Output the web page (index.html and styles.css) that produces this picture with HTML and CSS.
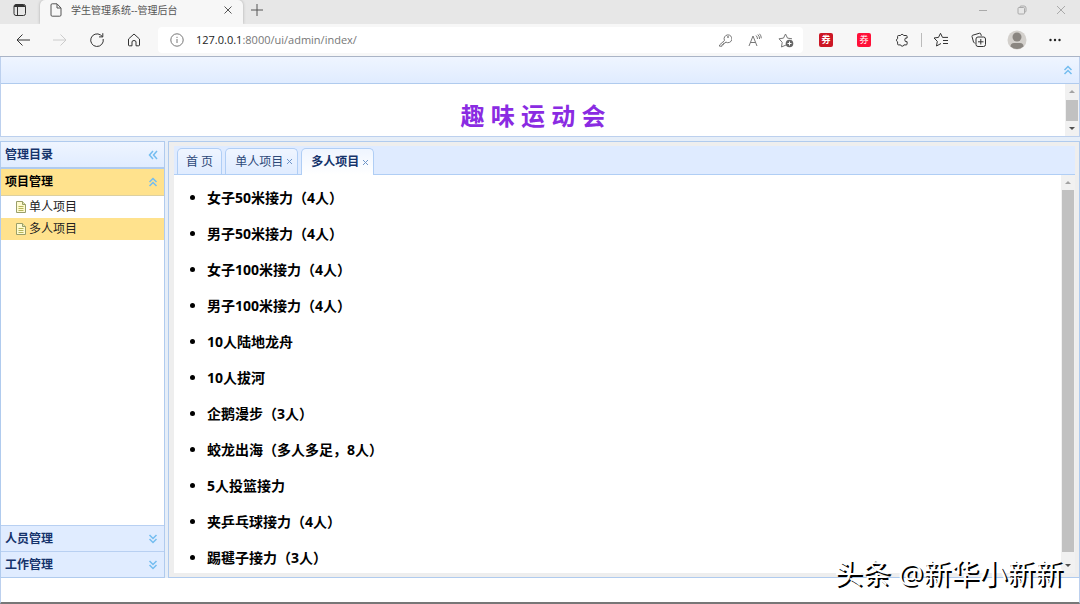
FILE: index.html
```html
<!DOCTYPE html>
<html lang="zh-CN">
<head>
<meta charset="utf-8">
<title>学生管理系统--管理后台</title>
<link rel="stylesheet" href="styles.css">
</head>
<body>
<svg class="defs" aria-hidden="true">
  <symbol id="chev-up" viewBox="0 0 10 10"><path d="M1.500 5 5 1.500 8.500 5M1.500 9 5 5.500 8.500 9"/></symbol>
  <symbol id="chev-down" viewBox="0 0 10 10"><path d="M1.500 1 5 4.500 8.500 1M1.500 5 5 8.500 8.500 5"/></symbol>
  <symbol id="chev-left" viewBox="0 0 10 10"><path d="M5 1 1.500 5 5 9M9 1 5.500 5 9 9"/></symbol>
  <symbol id="doc" viewBox="0 0 12 12"><path d="M1.500.5h6l3 3v8h-9z" fill="#fffbd0" stroke="#9a9f6a"/><path d="M7.500.5v3h3" fill="#dfe5a8" stroke="#9a9f6a"/><path d="M3.500 5.500h5M3.500 7.500h5M3.500 9.500h5" stroke="#b5b55a"/></symbol>
</svg>
<header class="browser">
  <div class="tabstrip">
    <button class="workspace" aria-label="标签操作"><svg width="14" height="14" viewBox="0 0 14 14"><rect x="1" y="1.500" width="11.500" height="11" rx="2"/><path d="M1 3.500h11.500M4.500 4v8.500" /><path d="M2 2.700h9.500" stroke-width="2"/></svg></button>
    <div class="page-tab">
      <svg width="12" height="14" viewBox="0 0 12 14"><path d="M1 2q0-1.200 1.200-1.200H7L11 5v7q0 1.200-1.200 1.200H2.200Q1 13.200 1 12zM7 1v4h4"/></svg>
      <span>学生管理系统--管理后台</span>
      <button aria-label="关闭标签"><svg width="8" height="8" viewBox="0 0 8 8"><path d="M.5.5l7 7M7.500.5l-7 7"/></svg></button>
    </div>
    <button class="new-tab" aria-label="新标签"><svg width="12" height="12" viewBox="0 0 12 12"><path d="M6 0v12M0 6h12"/></svg></button>
    <div class="window-buttons">
      <button aria-label="最小化"><svg width="10" height="10" viewBox="0 0 10 10"><path d="M1 5.500h8"/></svg></button>
      <button aria-label="还原"><svg width="10" height="10" viewBox="0 0 10 10"><rect x="1" y="2.500" width="6.500" height="6.500" rx="1"/><path d="M3 2q0-1 1-1h3q2 0 2 2v3q0 1-1 1"/></svg></button>
      <button aria-label="关闭"><svg width="10" height="10" viewBox="0 0 10 10"><path d="M1 1l8 8M9 1l-8 8"/></svg></button>
    </div>
  </div>
  <div class="toolbar">
    <div class="nav">
      <button aria-label="后退"><svg width="16" height="16" viewBox="0 0 16 16"><path d="M15 8H2M7.500 2.500 2 8l5.500 5.500"/></svg></button>
      <button class="off" aria-label="前进"><svg width="16" height="16" viewBox="0 0 16 16"><path d="M1 8h13M8.500 2.500 14 8l-5.500 5.500"/></svg></button>
      <button aria-label="刷新"><svg width="16" height="16" viewBox="0 0 16 16"><path d="M14.200 7A6.300 6.300 0 1 1 11.600 3l1.900 1.700M13.800 1.200v3.700H10"/></svg></button>
      <button aria-label="主页"><svg width="16" height="16" viewBox="0 0 16 16"><path d="M2.500 7 8 2l5.500 5v6q0 .8-.8.8H10V10Q10 8.500 8 8.500T6 10v3.800H3.300q-.8 0-.8-.8z"/></svg></button>
    </div>
    <div class="address">
      <svg width="14" height="14" viewBox="0 0 14 14"><circle cx="7" cy="7" r="6.200"/><path d="M7 6v4M7 3.800v1.200"/></svg>
      <span class="url"><b>127.0.0.1</b>:8000/ui/admin/index/</span>
      <button aria-label="密码"><svg width="14" height="14" viewBox="0 0 14 14"><path d="M6.500 7.500 1.500 12v1.200H4v-1.500h1.500v-1.500H7L7.800 9a3.900 3.900 0 1 0-1.300-1.500z"/><circle cx="10" cy="4" r=".6"/></svg></button>
      <button aria-label="朗读"><svg width="14" height="14" viewBox="0 0 14 14"><path d="M1 13 5 3l4 10M2.500 9.500h5M8 2.500q1.500 1.500 1.500 3.500M9.800 1.500q1.800 1.800 1.800 4.500M11.500.8q1.800 1.800 1.800 4.500"/></svg></button>
      <button aria-label="收藏"><svg width="16" height="16" viewBox="0 0 16 16"><path d="M8 13 3.500 15l.7-4.700L1 6.800l4.500-.7 2-4.100 2 4.100 4.500.7"/><circle cx="11.500" cy="11.500" r="3.800" fill="#666" stroke="none"/><path d="M11.500 9.500v4M9.500 11.500h4" stroke="#fff"/></svg></button>
    </div>
    <div class="tools">
      <button aria-label="优惠券一"><span class="coupon dark">券</span></button>
      <button aria-label="优惠券二"><span class="coupon">券</span></button>
      <button aria-label="扩展"><svg width="14" height="14" viewBox="0 0 14 14"><path d="M3.500 2.500h2a1.700 1.700 0 0 1 3.200 0h2.500q.9 0 .9.900V5a1.900 1.900 0 1 0 0 3.700v2.200q0 1-.9 1H8.900a1.700 1.700 0 0 1-3.300 0H3.500q-.9 0-.9-1V8.800a1.700 1.700 0 0 1 0-3.200V3.400q0-.9.9-.9z"/></svg></button>
      <span class="divider"></span>
      <button aria-label="收藏夹"><svg width="16" height="16" viewBox="0 0 16 16"><path d="M8 11.500 3.500 14l.8-4.700L1 6l4.500-.6 2-4.100 2 4.100H15M10 8.500h5M10 11.500h5"/></svg></button>
      <button aria-label="集锦"><svg width="16" height="16" viewBox="0 0 16 16"><path d="M4 11.500 2.500 10 1 4.500q-.2-1 .8-1.300L8.500 1.200q1-.2 1.300.8l.5 1.800"/><rect x="5" y="5" width="9.500" height="9.500" rx="2"/><path d="M9.800 7v5.500M7 9.800h5.500"/></svg></button>
      <button aria-label="用户"><svg class="avatar" width="20" height="20" viewBox="0 0 20 20"><circle cx="10" cy="10" r="9.500" fill="#d3d0cc"/><circle cx="10" cy="7" r="4.500" fill="#8a8681"/><path d="M3.500 16.500q0-3.500 3.500-3.500h6q3.500 0 3.500 3.500-6.500 5-13 0z" fill="#8a8681"/></svg></button>
      <button aria-label="更多"><svg width="14" height="4" viewBox="0 0 14 4"><g fill="#222" stroke="none"><circle cx="2.500" cy="2" r="1.200"/><circle cx="7" cy="2" r="1.200"/><circle cx="11.500" cy="2" r="1.200"/></g></svg></button>
    </div>
  </div>
</header>

<section class="north">
  <div class="panel-bar"><button aria-label="折叠"><svg class="chev"><use href="#chev-up"/></svg></button></div>
  <div class="north-body">
    <h1>趣 味 运 动 会</h1>
    <div class="scroll"><i class="up"></i><span class="thumb short"></span><i class="down"></i></div>
  </div>
</section>

<main class="middle">
  <aside class="west">
    <div class="west-head"><span>管理目录</span><button aria-label="收起"><svg class="chev"><use href="#chev-left"/></svg></button></div>
    <button class="acc open"><span>项目管理</span><svg class="chev"><use href="#chev-up"/></svg></button>
    <nav class="tree">
      <a href="#single"><svg><use href="#doc"/></svg>单人项目</a>
      <a href="#multi" class="current"><svg><use href="#doc"/></svg>多人项目</a>
    </nav>
    <button class="acc"><span>人员管理</span><svg class="chev"><use href="#chev-down"/></svg></button>
    <button class="acc"><span>工作管理</span><svg class="chev"><use href="#chev-down"/></svg></button>
  </aside>
  <section class="center">
    <div class="tabs">
      <div class="tab"><button>首 页</button></div>
      <div class="tab"><button>单人项目</button><button class="x" aria-label="关闭单人项目"><svg width="5" height="5" viewBox="0 0 5 5"><path d="M0 0l5 5M5 0 0 5"/></svg></button></div>
      <div class="tab active"><button>多人项目</button><button class="x" aria-label="关闭多人项目"><svg width="5" height="5" viewBox="0 0 5 5"><path d="M0 0l5 5M5 0 0 5"/></svg></button></div>
    </div>
    <div class="content">
      <ul class="events">
        <li>女子50米接力（4人）</li>
        <li>男子50米接力（4人）</li>
        <li>女子100米接力（4人）</li>
        <li>男子100米接力（4人）</li>
        <li>10人陆地龙舟</li>
        <li>10人拔河</li>
        <li>企鹅漫步（3人）</li>
        <li>蛟龙出海（多人多足，8人）</li>
        <li>5人投篮接力</li>
        <li>夹乒乓球接力（4人）</li>
        <li>踢毽子接力（3人）</li>
      </ul>
      <div class="scroll long"><i class="up"></i><span class="thumb"></span><i class="down"></i></div>
    </div>
  </section>
</main>
<footer class="south"></footer>
<div class="watermark">头条 @新华小新新</div>
</body>
</html>
```
FILE: styles.css
```css
* { box-sizing: border-box; }
body {
  margin: 0;
  height: 100vh;
  display: flex;
  flex-direction: column;
  overflow: hidden;
  position: relative;
  background: #e6eef8;
  color: #000;
  font: 12px/16px "Open Sans", "Noto Sans CJK SC", sans-serif;
}
button { border: 0; padding: 0; margin: 0; background: none; font: inherit; color: inherit; display: flex; align-items: center; justify-content: center; }
svg { display: block; fill: none; stroke: #333; flex: none; }
.defs { position: absolute; width: 0; height: 0; }

.tabstrip { height: 24px; display: flex; background: #e7e7e7; }
.tabstrip > button, .page-tab { height: 20px; }
.workspace { width: 40px; }
.tabstrip .page-tab { width: 203px; height: 24px; padding: 0 11px 4px 10px; display: flex; align-items: center; gap: 9px; background: #f7f7f7; border-radius: 5px 5px 0 0; box-shadow: 0 0 3px #aaa; color: #555; font-size: 10px; }
.page-tab span { flex: 1; }
.page-tab svg { stroke: #555; }
.new-tab { width: 28px; }
.new-tab svg { stroke: #555; }
.window-buttons { margin-left: auto; display: flex; height: 20px; padding-right: 14px; gap: 29px; }
.window-buttons svg { stroke: #aaa; }

.toolbar { position: relative; height: 33px; display: flex; align-items: center; background: #f7f7f7; border-bottom: 1px solid #aab4c6; }
.nav { display: flex; width: 158px; padding-left: 15px; gap: 21px; }
.nav .off svg { stroke: #ccc; }
.address { flex: 1; height: 26px; display: flex; align-items: center; gap: 16px; padding: 0 9px 0 12px; background: #fff; border-radius: 4px; color: #777; }
.address svg { stroke: #777; }
.url { flex: 1; margin-left: -4px; font-size: 11px; }
.url b { font-weight: 400; color: #222; }
.tools { width: 277px; padding: 0 6px 0 4px; display: flex; align-items: center; }
.tools button { width: 38px; flex: none; }
.coupon { width: 14px; height: 14px; border-radius: 2px; background: #ff1038; color: #fff; font-size: 9px; line-height: 14px; text-align: center; }
.coupon.dark { background: #cc1725; font-weight: 700; }
.divider { width: 1px; height: 14px; background: #bbb; }
.tools .avatar { stroke: none; }

.north { border: 1px solid #bcd0ee; border-top: 0; background: #fff; }
.panel-bar { height: 27px; display: flex; align-items: center; justify-content: flex-end; padding-right: 6px; background: linear-gradient(#eff5ff, #e0ecff); border-bottom: 1px solid #b0cbee; }
.chev { width: 10px; height: 10px; stroke: #74bdf0; stroke-width: 1.5; }
.north-body { height: 52px; display: flex; overflow: hidden; }
h1 { flex: 1; margin: 0; padding-top: 16px; text-align: center; color: #8a2be2; font-size: 24px; line-height: 32px; font-weight: 700; }
.scroll { width: 14px; padding: 6px 1px; display: flex; flex-direction: column; align-items: center; gap: 5px; background: #f1f1f1; flex: none; }
.scroll i { border: 3px solid transparent; }
.scroll .up { border-top: 0; border-bottom-color: #a3a3a3; }
.scroll .down { border-bottom: 0; border-top-color: #505050; }
.scroll.long { gap: 6px; }
.scroll.long .down { margin-top: 6px; }
.thumb { flex: 1; width: 100%; background: #c1c1c1; }
.thumb.short { flex: none; height: 21px; }
.north-body .scroll { justify-content: space-between; }

.middle { flex: 1; min-height: 0; margin-top: 4px; display: flex; gap: 3px; }
.west { width: 165px; display: flex; flex-direction: column; border: 1px solid #b0cbee; background: #fff; color: #15336b; font-weight: 700; }
.west-head, .acc { display: flex; align-items: center; justify-content: space-between; padding: 0 6px 0 4px; flex: none; }
.west-head { height: 27px; background: linear-gradient(#eff5ff, #e0ecff); border-bottom: 2px solid #b0cbee; }
.acc { height: 26px; background: #e0ecff; border-top: 1px solid #b8d0f2; }
.acc.open { height: 27px; background: #ffe28d; color: #000; border-top: 0; border-bottom: 1px solid #ddd0a0; }
.tree { flex: 1; font-weight: 400; }
.tree a { height: 22px; display: flex; align-items: center; gap: 2px; padding-left: 14px; color: #222; text-decoration: none; }
.tree svg { width: 12px; height: 12px; }
.tree .current { background: #ffe28d; }

.center { flex: 1; min-width: 0; display: flex; flex-direction: column; padding: 4px 4px 4px 5px; background: #eee; border: 1px solid #b0cbee; }
.tabs { height: 29px; padding: 0 3px; display: flex; gap: 3px; align-items: flex-end; background: #dfebff; border-bottom: 1px solid #b0cef5; flex: none; }
.tab { height: 26px; display: flex; align-items: center; gap: 4px; padding: 0 5px 0 9px; border: 1px solid #b0cef5; border-bottom: 0; border-radius: 5px 5px 0 0; background: linear-gradient(#eff5ff, #e0ecff); color: #2c4878; }
.tab:first-child { padding: 0 8px; }
.tab.active { height: 27px; margin-bottom: -1px; background: linear-gradient(#eff5ff, #fff); color: #15336b; font-weight: 700; }
.tab .x svg { stroke: #6f95c8; }
.content { flex: 1; min-height: 0; display: flex; background: #fff; overflow: hidden; }
.events { flex: 1; margin: 0; padding: 13px 0 0 33px; display: flex; flex-direction: column; gap: 16px; font-size: 14px; line-height: 20px; font-weight: 700; }
.south { height: 26px; background: #fff; border: 1px solid #bcd0ee; border-top: 0; border-bottom: 2px solid #777; flex: none; }
.watermark { position: absolute; right: 17px; bottom: 13px; font-size: 28px; line-height: 36px; color: #fff; text-shadow: 2px 2px 0 #000; }
```
